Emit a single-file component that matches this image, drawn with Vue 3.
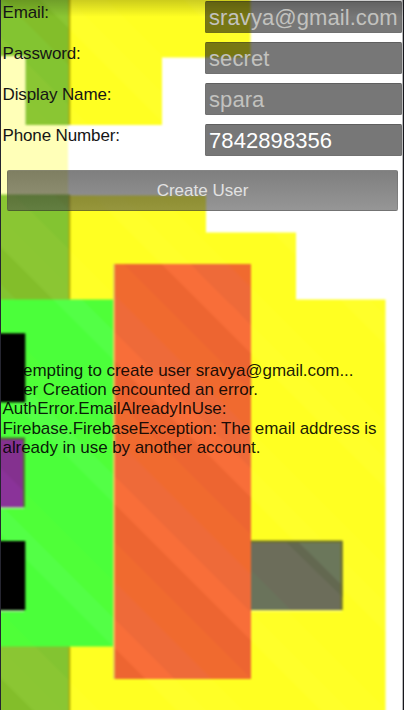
<script setup>
import { ref } from 'vue'

const fields = ref([
  { label: 'Email:', placeholder: 'sravya@gmail.com', value: '' },
  { label: 'Password:', placeholder: 'secret', value: '' },
  { label: 'Display Name:', placeholder: 'spara', value: '' },
  { label: 'Phone Number:', placeholder: '', value: '7842898356' },
])

const log = [
  { text: 'Attempting to create user sravya@gmail.com...', width: 351 },
  { text: 'User Creation encounted an error.', width: 255.5 },
  { text: 'AuthError.EmailAlreadyInUse:', width: 224 },
  { text: 'Firebase.FirebaseException: The email address is', width: 374 },
  { text: 'already in use by another account.', width: 258 },
]

// Diagonal sheen: highlight, shade, mid, tint, each with hard stops.
const stops = [0, 0.2, 0.2, 0.46, 0.46, 0.74, 0.74, 1]
const sheens = [
  { id: 'orange', tones: ['#f86e39', '#ed6531', '#f06a2f', '#ee6a39'] },
  { id: 'green', tones: ['#53ff46', '#4bff3a', '#4bff3a', '#4fff38'] },
  { id: 'olive', tones: ['#8bc633', '#83be2a', '#83c431', '#8ac633'] },
  { id: 'yellow', tones: ['#ffff2a', '#ffff22', '#ffff22', '#ffff26'] },
  { id: 'purple', tones: ['#883199', '#883199', '#84318f', '#8a3399'] },
]
</script>

<template>
  <main class="screen">
    <svg class="scene" viewBox="0 0 404 710" width="404" height="710" aria-hidden="true">
      <defs>
        <linearGradient
          v-for="s in sheens"
          :id="s.id"
          :key="s.id"
          gradientUnits="userSpaceOnUse"
          spreadMethod="repeat"
          x1="0"
          y1="74"
          x2="-71.8"
          y2="145.8"
        >
          <stop v-for="(o, i) in stops" :key="i" :offset="o" :stop-color="s.tones[i >> 1]" />
        </linearGradient>
        <linearGradient id="shade" x1="0" y1="0" x2="0" y2="1">
          <stop offset="0" stop-color="#000" stop-opacity=".2" />
          <stop offset="1" stop-color="#000" stop-opacity="0" />
        </linearGradient>
        <filter id="soften" filterUnits="userSpaceOnUse" x="-10" y="-10" width="424" height="730" color-interpolation-filters="sRGB">
          <feGaussianBlur stdDeviation=".8" />
        </filter>
      </defs>
      <rect width="404" height="710" fill="#fff" />
      <g filter="url(#soften)">
        <path d="M-8 56H25.5V125H68V196H-8Z" fill="#ffffb8" />
        <path d="M69-8H250.5V57.500H162V125H69Z" fill="url(#yellow)" />
        <path d="M69 195.500H206V232.500H296V299.500H385.500V718H69Z" fill="url(#yellow)" />
        <path d="M-8-8H70V125H25.500V56H-8ZM-8 194.500H70V300H-8ZM-8 646H70V718H-8Z" fill="url(#olive)" />
        <path d="M69.500-8V125M69.500 195V299M69.500 647V718" stroke="#b5a800" stroke-width="1.600" />
        <rect x="-8" y="299.500" width="122" height="347" fill="url(#green)" />
        <path d="M114 264V679" stroke="#e7d95c" stroke-width="2" />
        <rect x="114.700" y="264" width="136.300" height="415" fill="url(#orange)" />
        <rect x="-8" y="333.300" width="33.300" height="69" fill="#000" />
        <rect x="-8" y="439" width="31" height="68" fill="url(#purple)" />
        <path d="M-8 438.500H24V507" fill="none" stroke="#4d682f" stroke-width="1.800" />
        <rect x="-8" y="541" width="33.300" height="69" fill="#000" />
        <path d="M-8 508H24M-8 611H24" stroke="#b6d8ac" stroke-width="1.500" />
        <path d="M251 541H342.500V610H251Z" fill="#6c6d5a" />
        <path d="M297 541H342.500V586Z" fill="#6b775b" />
        <path d="M285 541H297L342.500 586V597Z" fill="#636850" />
        <path d="M251 570L291 610H251Z" fill="#6a735b" />
        <path d="M251 541.500H341.500V610" fill="none" stroke="#6d7025" stroke-width="1.800" />
        <path d="M251 611H342" stroke="#ffffa0" stroke-width="1.200" />
      </g>
      <rect width="404" height="17" fill="url(#shade)" />
      <rect width="1" height="710" fill="#252530" />
      <rect x="402.700" width="1.300" height="710" fill="#17171c" />
    </svg>

    <div class="content">
      <form class="form" @submit.prevent>
        <label v-for="f in fields" :key="f.label" class="row">
          <span class="label">{{ f.label }}</span>
          <input v-model="f.value" class="field" type="text" :placeholder="f.placeholder" />
        </label>
        <button class="submit" type="submit">Create User</button>
      </form>
      <svg class="log" width="404" height="100" role="log">
        <text
          v-for="(line, i) in log"
          :key="i"
          x="2.500"
          :y="15.500 + i * 19.400"
          :textLength="line.width"
        >{{ line.text }}</text>
      </svg>
    </div>
  </main>
</template>

<style>
body {
  overflow: hidden;
}
</style>

<style scoped>
.screen {
  display: grid;
  width: 404px;
  height: 710px;
  overflow: hidden;
  font-family: "Liberation Sans", Arial, sans-serif;
  color: #151515;
}
.scene,
.content {
  grid-area: 1 / 1;
}
.scene {
  display: block;
}
.content {
  z-index: 1;
  display: flex;
  flex-direction: column;
}
.form {
  display: flex;
  flex-direction: column;
  padding-top: 1px;
}
.row {
  display: grid;
  grid-template-columns: 202.500px 197px;
  height: 41px;
  padding-left: 2.500px;
}
.label {
  padding-top: 2px;
  font-size: 17px;
  line-height: 20px;
  letter-spacing: -0.130px;
}
.field {
  box-sizing: border-box;
  width: 197px;
  height: 32px;
  padding: 2px 3px 0;
  border: 1px solid rgba(80, 80, 80, 0.12);
  border-top-color: rgba(40, 40, 40, 0.3);
  border-radius: 1.500px;
  outline: none;
  background: rgba(4, 4, 4, 0.54);
  color: #fff;
  font-family: inherit;
  font-size: 22px;
  letter-spacing: 0.080px;
}
.field::placeholder {
  color: #c2c2bf;
  opacity: 1;
}
.submit {
  width: 391px;
  height: 41.500px;
  margin: 4.500px 0 0 6.500px;
  padding: 1px 0 0 1px;
  border: 1px solid rgba(60, 60, 60, 0.18);
  border-radius: 2px;
  background: linear-gradient(rgba(37, 37, 37, 0.590), rgba(76, 76, 76, 0.590));
  color: #e2e2e2;
  font-family: inherit;
  font-size: 17px;
}
.log {
  margin-top: 149px;
  fill: #000;
  fill-opacity: 0.900;
  font-size: 17px;
}
</style>
